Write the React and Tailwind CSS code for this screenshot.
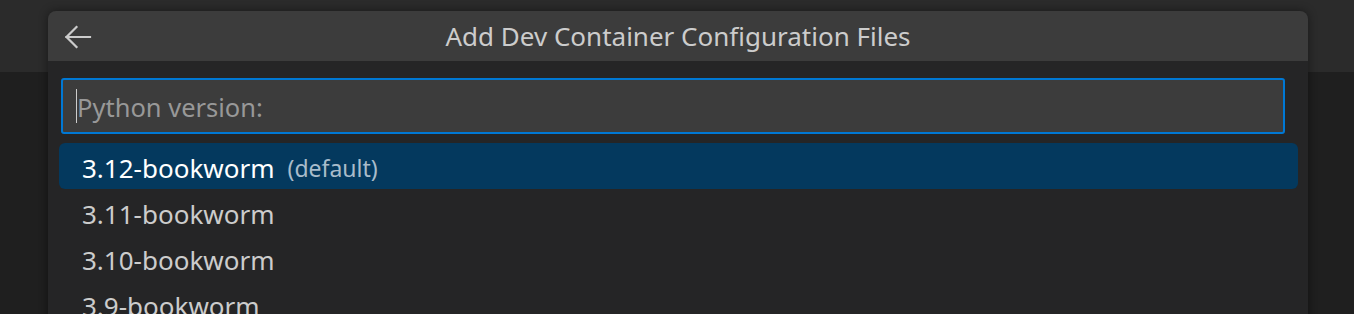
import React from "react";

const versions = ["3.12-bookworm", "3.11-bookworm", "3.10-bookworm", "3.9-bookworm", "3.8-bookworm"];

function ArrowLeft() {
  return (
    <svg width="28" height="24" viewBox="0 0 28 24" fill="none" stroke="#cccccc" strokeWidth="2.2" strokeLinecap="square">
      <path d="M2.5 12H26" />
      <path d="M12.5 2L2.5 12L12.5 22" />
    </svg>
  );
}

export default function App() {
  return (
    <div
      className="relative w-[1354px] h-[314px] overflow-hidden bg-[#1f1f1f]"
      style={{ fontFamily: '"Segoe UI", "Noto Sans", sans-serif' }}
    >
      <div className="h-[72px] bg-[#2b2b2b]" />

      {/* quick pick */}
      <div className="absolute left-[48px] top-[11px] w-[1260px] h-[330px] rounded-t-[8px] overflow-hidden bg-[#252526] shadow-[0_0_10px_rgba(0,0,0,0.45)]">
        <div className="relative h-[50px] bg-[#3c3c3c] flex items-center justify-center">
          <div className="absolute left-[16px] top-[14px]">
            <ArrowLeft />
          </div>
          <span className="text-[26px] leading-none text-[#cccccc]">Add Dev Container Configuration Files</span>
        </div>

        <div className="pl-[13px] pr-[23px] pt-[17px]">
          <div className="h-[56px] border-2 border-[#0078d4] rounded-[3px] bg-[#3c3c3c] flex items-center pl-[13px]">
            <div className="w-px h-[34px] bg-[#cccccc]" />
            <span className="pt-[4px] text-[25.5px] leading-none text-[#989898]">Python version:</span>
          </div>
        </div>

        <div className="pl-[11px] pr-[10px] pt-[9px] flex flex-col">
          {versions.map((v, i) => (
            <div
              key={v}
              className={
                i === 0
                  ? "h-[46px] rounded-[6px] bg-[#04395e] flex items-center pt-[4px] pl-[23px] text-white"
                  : "h-[46px] flex items-center pt-[4px] pl-[23px] text-[#cccccc]"
              }
            >
              <span className="text-[26px] leading-none">{v}</span>
              {i === 0 && <span className="ml-[13px] text-[23px] leading-none text-[#a9bccb]">(default)</span>}
            </div>
          ))}
        </div>
      </div>
    </div>
  );
}
